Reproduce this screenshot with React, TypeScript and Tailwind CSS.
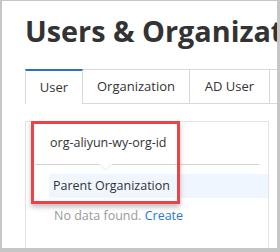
// Users & Organizations screenshot, 280x252

const font = { fontFamily: '"Open Sans", "Noto Sans", sans-serif' }

export default function App() {
  return (
    <div className="w-[280px] h-[252px] bg-[#c6c6c6] pt-px pl-[2px] pr-[3px] pb-[4px]" style={font}>
      <div className="relative w-full h-full bg-white overflow-hidden">
        <h1 className="pl-[23px] pt-[11px] text-[28.8px] leading-[37px] font-bold text-[#333] whitespace-nowrap">
          Users &amp; Organizations
        </h1>

        <div className="flex mt-[20px] ml-[23px] h-[35px] text-[13px] text-[#333] whitespace-nowrap">
          <div className="shrink-0 w-[58px] flex items-center justify-center border-t-2 border-t-[#2b6fce] border-x border-x-[#d9d9d9]">
            User
          </div>
          <div className="shrink-0 w-[107px] flex items-center justify-center border border-l-0 border-[#d9d9d9]">
            Organization
          </div>
          <div className="shrink-0 w-[80px] flex items-center justify-center border border-l-0 border-[#d9d9d9]">
            AD User
          </div>
          <div className="shrink-0 w-[40px] border border-l-0 border-[#d9d9d9]" />
        </div>

        <div className="ml-[23px] mt-[17px] w-[244px] h-[200px] border border-[#e3e3e3] text-[12.5px]">
          <div className="h-[42px] flex items-center pl-[24px] text-[#333]">org-aliyun-wy-org-id</div>
          <div className="relative mx-[9px] border-t border-[#d6d6d6]">
            <div className="absolute left-[66px] -top-[5px] w-[9px] h-[9px] bg-white rotate-45 border-r border-b border-[#ececec]" />
          </div>
          <div className="ml-[23px] mt-[9px] h-[24px] bg-[#f0f6ff] flex items-center pl-[4px] text-[#333]">
            Parent Organization
          </div>
          <div className="ml-[28px] mt-[9px] text-[#9a9a9a]">
            No data found. <span className="text-[#2a78d2]">Create</span>
          </div>
        </div>

        <div className="absolute left-[29px] top-[120px] w-[149px] h-[83px] border-[3px] border-[#ec4346] shadow-[0_3px_5px_rgba(0,0,0,0.25)]" />
      </div>
    </div>
  )
}
